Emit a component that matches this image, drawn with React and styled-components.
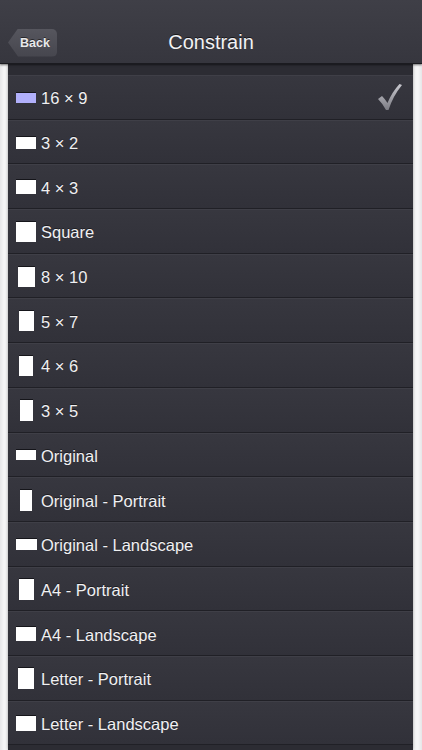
import React from "react";
import styled, { createGlobalStyle } from "styled-components";

const GlobalStyle = createGlobalStyle`
  body {
    margin: 0;
    background: #f1f1f2;
    font-family: "Liberation Sans", Arial, sans-serif;
  }
`;

const Page = styled.div`
  width: 422px;
  height: 750px;
  overflow: hidden;
  display: flex;
  flex-direction: column;
  background: #f1f1f2;
`;

const NavBar = styled.div`
  position: relative;
  z-index: 2;
  height: 64px;
  box-sizing: border-box;
  padding: 22px 8px 0;
  display: grid;
  grid-template-columns: 1fr auto 1fr;
  align-items: center;
  background: linear-gradient(#3f3f47, #36363e);
  border-bottom: 1px solid #1b1b20;
  box-shadow: 0 1px 2px rgba(0, 0, 0, 0.55);
`;

const BackButton = styled.button`
  justify-self: start;
  height: 28px;
  width: 49px;
  padding: 0 0 0 5px;
  border: none;
  border-radius: 0 5px 5px 0;
  clip-path: polygon(10px 0, 100% 0, 100% 100%, 10px 100%, 0 50%);
  background: linear-gradient(#56565e, #46464e);
  color: #e8e8ea;
  font-family: "Liberation Sans", Arial, sans-serif;
  font-size: 12.5px;
  font-weight: bold;
  text-shadow: 0 -1px 0 rgba(0, 0, 0, 0.5);
`;

const Title = styled.h1`
  margin: 0;
  font-size: 20px;
  font-weight: normal;
  color: #f2f2f4;
  text-shadow: 0 -1px 0 rgba(0, 0, 0, 0.6);
`;

const Body = styled.div`
  flex: 1;
  padding: 0 9px 0 8px;
  background: linear-gradient(90deg, #e6e6e8, #f6f6f7 4px, #f6f6f7 calc(100% - 4px), #e6e6e8);
`;

const List = styled.div`
  height: 100%;
  padding-top: 11px;
  box-sizing: border-box;
  background: #2c2c33;
  box-shadow: 0 0 3px rgba(0, 0, 0, 0.35);
`;

const Row = styled.div`
  height: 44.7px;
  box-sizing: border-box;
  display: flex;
  align-items: center;
  padding: 0 10px 0 7px;
  border-top: 1px solid #3f3f47;
  border-bottom: 1px solid #202026;
  background: linear-gradient(#37373f, #313139);
`;

const IconBox = styled.div`
  width: 22px;
  margin-right: 4px;
  display: flex;
  justify-content: center;
  align-items: center;
`;

const Shape = styled.div`
  width: ${(p) => p.$w}px;
  height: ${(p) => p.$h}px;
  background: ${(p) => (p.$active ? "#b1b0fb" : "#ffffff")};
  box-shadow: inset 0 1px 0 #15151a;
`;

const Label = styled.span`
  flex: 1;
  padding-top: 3px;
  font-size: 16.5px;
  color: #f0f0f2;
  text-shadow: 0 -1px 0 rgba(0, 0, 0, 0.45);
`;

const Check = () => (
  <svg width="26" height="28" viewBox="0 0 26 28">
    <defs>
      <linearGradient id="chk" x1="0" y1="0" x2="0" y2="1">
        <stop offset="0" stopColor="#c9c9cf" />
        <stop offset="1" stopColor="#7c7c84" />
      </linearGradient>
    </defs>
    <path
      d="M1 16 L5 13 Q8 16 10.5 20 Q15 9 22.5 1 L25 2 Q16 13 11.5 27 L9 27 Q6 21 1 16 Z"
      fill="url(#chk)"
    />
  </svg>
);

const items = [
  { label: "16 × 9", w: 20, h: 11, active: true },
  { label: "3 × 2", w: 20, h: 13 },
  { label: "4 × 3", w: 20, h: 15 },
  { label: "Square", w: 20, h: 21 },
  { label: "8 × 10", w: 17, h: 21 },
  { label: "5 × 7", w: 15, h: 21 },
  { label: "4 × 6", w: 14, h: 21 },
  { label: "3 × 5", w: 13, h: 22 },
  { label: "Original", w: 20, h: 11 },
  { label: "Original - Portrait", w: 12, h: 22 },
  { label: "Original - Landscape", w: 21, h: 12 },
  { label: "A4 - Portrait", w: 15, h: 22 },
  { label: "A4 - Landscape", w: 20, h: 15 },
  { label: "Letter - Portrait", w: 16, h: 22 },
  { label: "Letter - Landscape", w: 20, h: 16 },
];

export default function App() {
  return (
    <Page>
      <GlobalStyle />
      <NavBar>
        <BackButton>Back</BackButton>
        <Title>Constrain</Title>
        <span />
      </NavBar>
      <Body>
        <List>
          {items.map((it) => (
            <Row key={it.label}>
              <IconBox>
                <Shape $w={it.w} $h={it.h} $active={it.active} />
              </IconBox>
              <Label>{it.label}</Label>
              {it.active && <Check />}
            </Row>
          ))}
        </List>
      </Body>
    </Page>
  );
}
